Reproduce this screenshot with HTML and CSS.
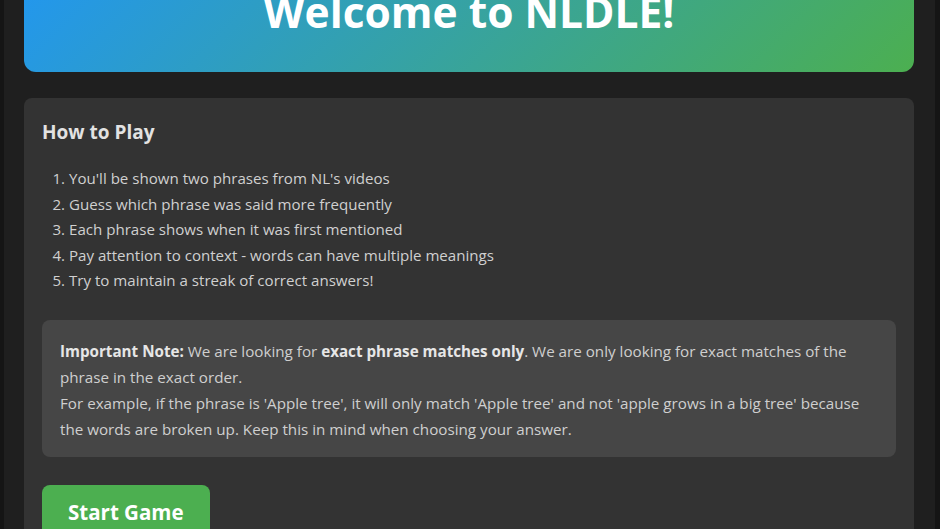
FILE: index.html
```html
<!DOCTYPE html>
<html lang="en">
<head>
<meta charset="utf-8">
<title>NLDLE</title>
<link rel="stylesheet" href="styles.css">
</head>
<body>
<div class="page">
  <header class="hero">
    <h1 class="hero-title">Welcome to NLDLE!</h1>
  </header>
  <section class="card">
    <h2 class="card-title">How to Play</h2>
    <ol class="rules">
      <li>You'll be shown two phrases from NL's videos</li>
      <li>Guess which phrase was said more frequently</li>
      <li>Each phrase shows when it was first mentioned</li>
      <li>Pay attention to context - words can have multiple meanings</li>
      <li>Try to maintain a streak of correct answers!</li>
    </ol>
    <div class="note">
      <p><strong>Important Note:</strong> We are looking for <strong>exact phrase matches only</strong>. We are only looking for exact matches of the phrase in the exact order.<br>For example, if the phrase is 'Apple tree', it will only match 'Apple tree' and not 'apple grows in a big tree' because the words are broken up. Keep this in mind when choosing your answer.</p>
    </div>
    <button class="start-btn">Start Game</button>
  </section>
</div>
</body>
</html>
```
FILE: styles.css
```css
html {
  background: #151515;
}
body {
  margin: 0;
  font-family: "Open Sans", "Noto Sans", sans-serif;
  color: #cccccc;
}
.page {
  margin: 0 5px 0 4px;
  background: #1f1f1f;
  padding: 0 21px 40px 20px;
  min-height: 600px;
}
.hero {
  margin-top: -48px;
  padding: 36px 20px;
  border-radius: 12px;
  background: linear-gradient(135deg, #2196f3 0%, #4caf50 100%);
  text-align: center;
}
.hero-title {
  margin: 0;
  font-size: 42.5px;
  line-height: 48px;
  font-weight: 700;
  color: #ffffff;
}
.card {
  margin-top: 26px;
  background: #333333;
  border-radius: 8px;
  padding: 21px 18px 20px;
}
.card-title {
  margin: 0;
  font-size: 19px;
  line-height: 26px;
  font-weight: 700;
  color: #e2e2e2;
}
.rules {
  margin: 21px 0 0;
  padding-left: 27px;
  font-size: 15.1px;
  line-height: 25.5px;
  color: #d0d0d0;
}
.note {
  margin-top: 26px;
  background: #464646;
  border-radius: 8px;
  padding: 18px 18px 15px;
}
.note p {
  margin: 0;
  font-size: 15.2px;
  line-height: 26px;
  color: #cfcfcf;
}
.note strong {
  color: #e6e6e6;
}
.start-btn {
  display: block;
  margin-top: 28px;
  background: #4caf50;
  color: #ffffff;
  border: none;
  border-radius: 8px;
  padding: 15px 26px;
  font-family: inherit;
  font-size: 20.5px;
  line-height: 24px;
  font-weight: 700;
}
```
